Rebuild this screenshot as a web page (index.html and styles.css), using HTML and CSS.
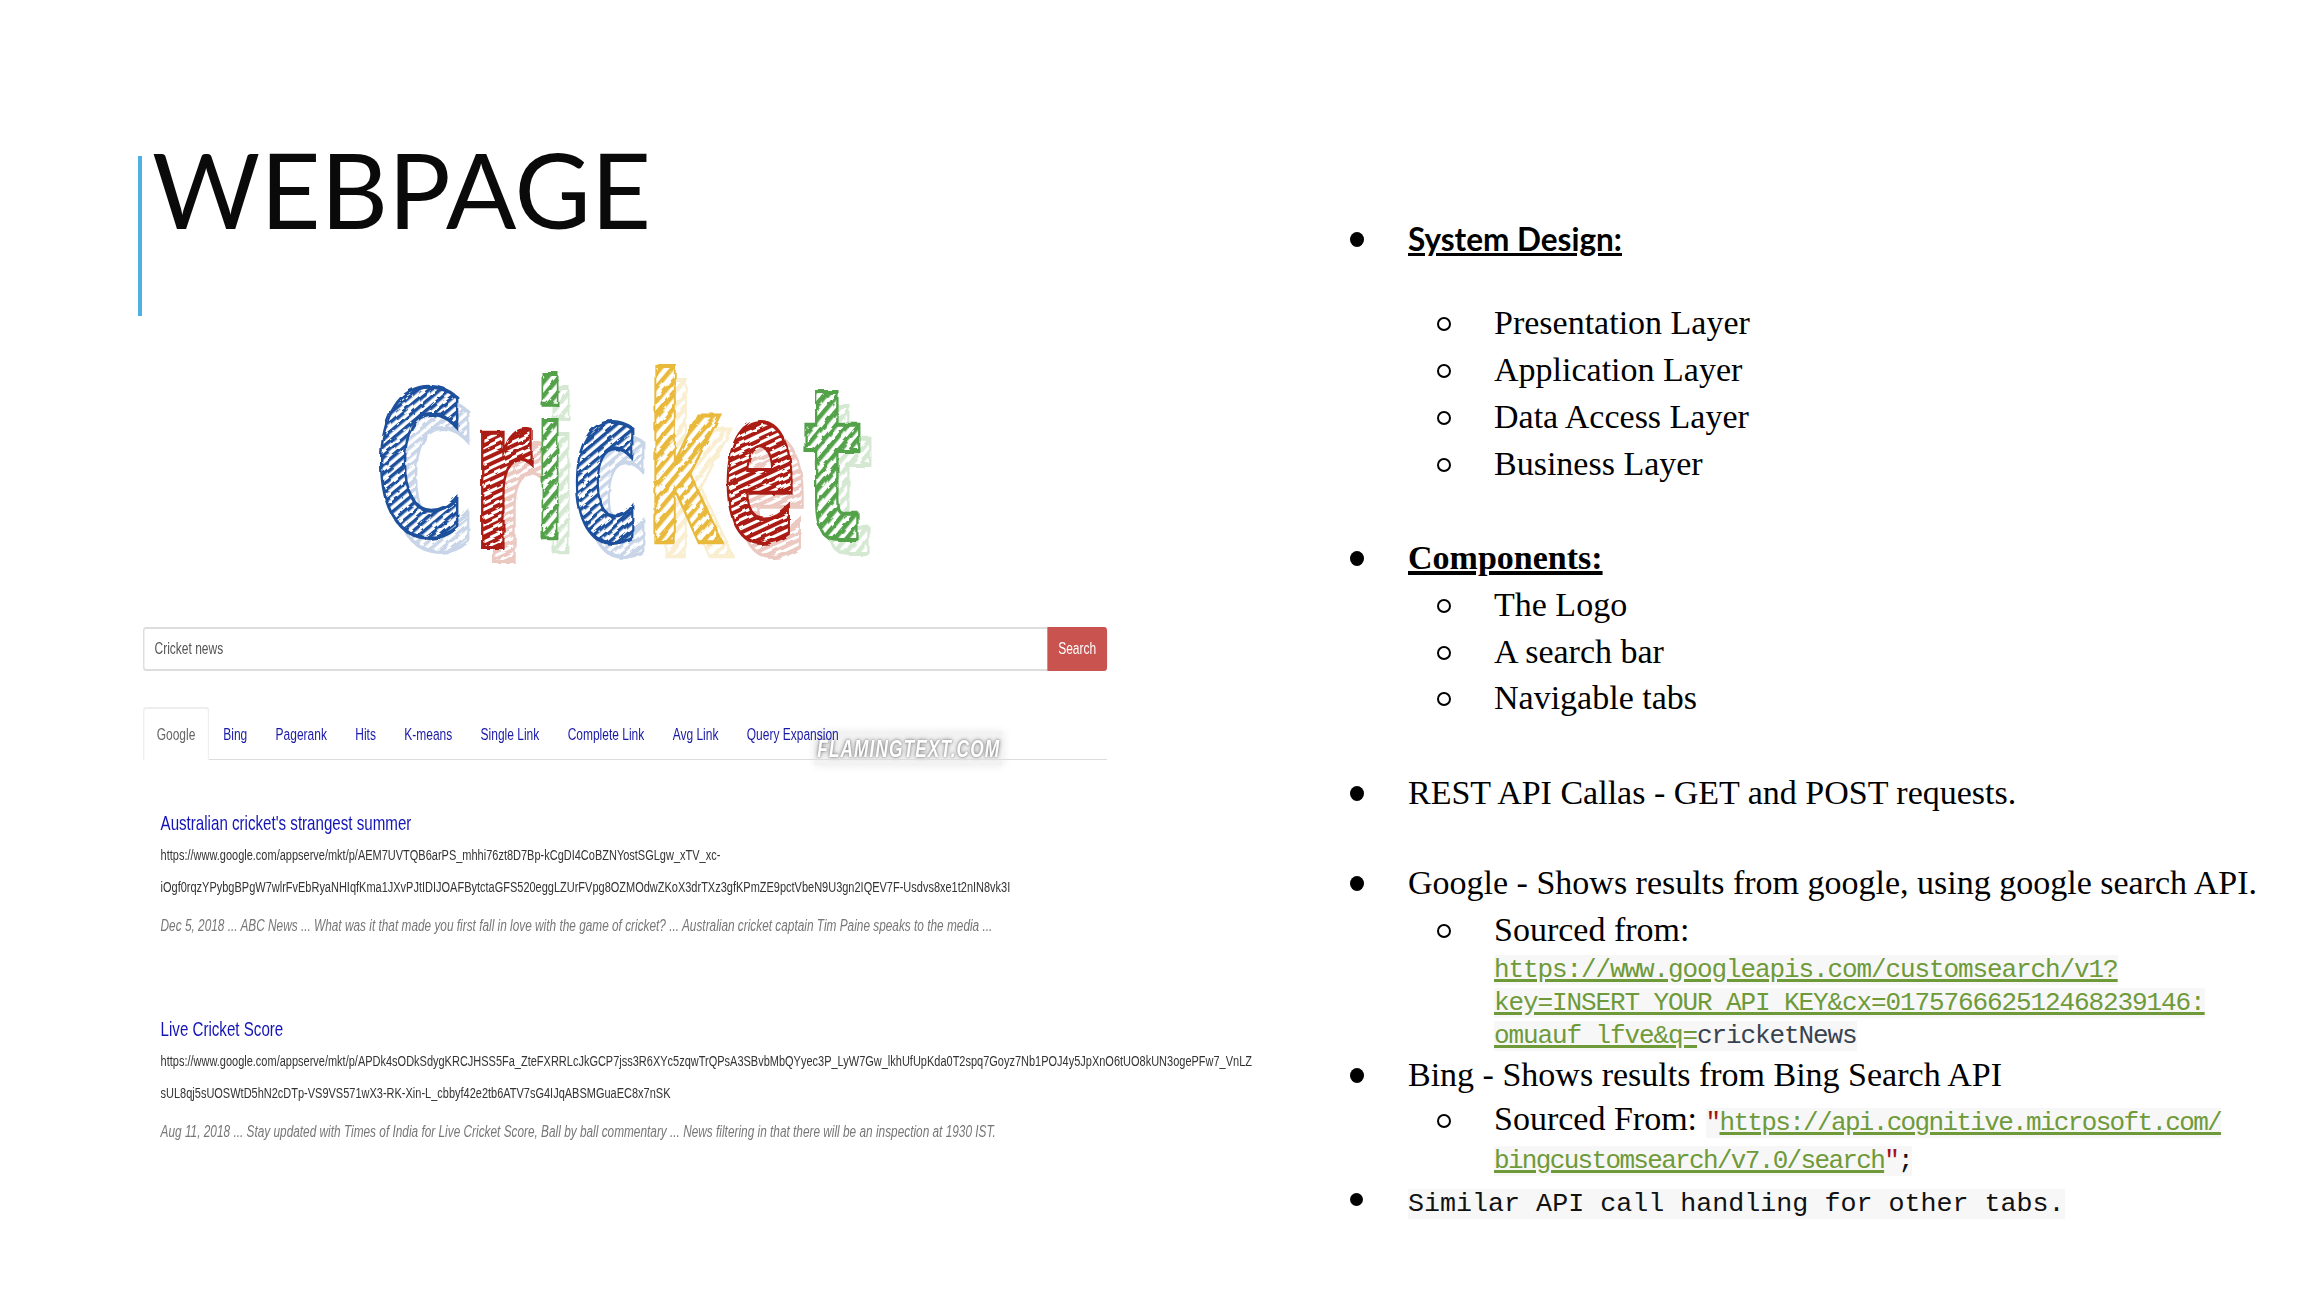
FILE: index.html
```html
<!DOCTYPE html>
<html lang="en">

<head>
    <meta charset="UTF-8">
    <title>Webpage</title>
    <link rel="stylesheet" href="styles.css">
</head>

<body>
    <div class="slide">
        <div class="left">
            <h1 class="title"><span>WEBPAGE</span></h1>

            <!-- Logo: real letters, filled with a hatch. The filter does the sketchy edge and the faded copy -->
            <svg class="logo" width="540" height="300" viewBox="0 -40 540 300" font-family="DejaVu Sans" font-weight="700" font-size="210">
                <defs>
                    <pattern id="hatch-blue" width="7" height="7" patternUnits="userSpaceOnUse" patternTransform="rotate(-40)">
                        <rect width="7" height="7" fill="#fff"/><rect width="7" height="3.5" fill="#1c4f9c"/>
                    </pattern>
                    <pattern id="hatch-red" width="7" height="7" patternUnits="userSpaceOnUse" patternTransform="rotate(-25)">
                        <rect width="7" height="7" fill="#fff"/><rect width="7" height="4" fill="#ab1f12"/>
                    </pattern>
                    <pattern id="hatch-green" width="9" height="9" patternUnits="userSpaceOnUse" patternTransform="rotate(-50)">
                        <rect width="9" height="9" fill="#fff"/><rect width="9" height="4.5" fill="#52a24a"/>
                    </pattern>
                    <pattern id="hatch-yellow" width="9" height="9" patternUnits="userSpaceOnUse" patternTransform="rotate(-50)">
                        <rect width="9" height="9" fill="#fff"/><rect width="9" height="4.5" fill="#e8b93a"/>
                    </pattern>
                    <filter id="sketch" x="-5%" y="-5%" width="115%" height="115%">
                        <feTurbulence type="fractalNoise" baseFrequency="0.09" numOctaves="2" seed="4" result="noise"/>
                        <feDisplacementMap in="SourceGraphic" in2="noise" scale="4" result="rough"/>
                        <feOffset in="rough" dx="11" dy="14" result="moved"/>
                        <feComponentTransfer in="moved" result="faded">
                            <feFuncA type="linear" slope="0.25"/>
                        </feComponentTransfer>
                        <feMerge>
                            <feMergeNode in="faded"/>
                            <feMergeNode in="rough"/>
                        </feMerge>
                    </filter>
                </defs>
                <g stroke-width="4" filter="url(#sketch)">
                    <text x="15" y="190" textLength="90" lengthAdjust="spacingAndGlyphs" font-size="200" fill="url(#hatch-blue)" stroke="#1c4f9c">C</text>
                    <text x="112" y="203" textLength="60" lengthAdjust="spacingAndGlyphs" fill="url(#hatch-red)" stroke="#ab1f12">r</text>
                    <text x="175" y="193" textLength="30" lengthAdjust="spacingAndGlyphs" font-size="216" fill="url(#hatch-green)" stroke="#52a24a">i</text>
                    <text x="212" y="195" textLength="68" lengthAdjust="spacingAndGlyphs" fill="url(#hatch-blue)" stroke="#1c4f9c">c</text>
                    <text x="286" y="197" textLength="74" lengthAdjust="spacingAndGlyphs" font-size="232" fill="url(#hatch-yellow)" stroke="#e8b93a">k</text>
                    <text x="363" y="195" textLength="74" lengthAdjust="spacingAndGlyphs" fill="url(#hatch-red)" stroke="#ab1f12">e</text>
                    <text x="444" y="195" textLength="58" lengthAdjust="spacingAndGlyphs" fill="url(#hatch-green)" stroke="#52a24a">t</text>
                </g>
            </svg>

            <!-- Squeezed screenshot of the search page -->
            <div class="shot">
                <div class="search">
                    <div class="search-input">Cricket news</div>
                    <div class="search-btn">Search</div>
                </div>
                <div class="watermark"><span>FLAMINGTEXT.COM</span></div>
                <div class="tabs">
                    <span class="tab active">Google</span>
                    <span class="tab">Bing</span>
                    <span class="tab">Pagerank</span>
                    <span class="tab">Hits</span>
                    <span class="tab">K-means</span>
                    <span class="tab">Single Link</span>
                    <span class="tab">Complete Link</span>
                    <span class="tab">Avg Link</span>
                    <span class="tab">Query Expansion</span>
                </div>
                <div class="result">
                    <div class="result-title">Australian cricket's strangest summer</div>
                    <div class="result-url">https://www.google.com/appserve/mkt/p/AEM7UVTQB6arPS_mhhi76zt8D7Bp-kCgDI4CoBZNYostSGLgw_xTV_xc-</div>
                    <div class="result-url">iOgf0rqzYPybgBPgW7wlrFvEbRyaNHIqfKma1JXvPJtIDIJOAFBytctaGFS520eggLZUrFVpg8OZMOdwZKoX3drTXz3gfKPmZE9pctVbeN9U3gn2IQEV7F-Usdvs8xe1t2nIN8vk3I</div>
                    <div class="result-text">Dec 5, 2018 ... ABC News ... What was it that made you first fall in love with the game of cricket? ... Australian cricket captain Tim Paine speaks to the media ...</div>
                </div>
                <div class="result">
                    <div class="result-title">Live Cricket Score</div>
                    <div class="result-url">https://www.google.com/appserve/mkt/p/APDk4sODkSdygKRCJHSS5Fa_ZteFXRRLcJkGCP7jss3R6XYc5zqwTrQPsA3SBvbMbQYyec3P_LyW7Gw_lkhUfUpKda0T2spq7Goyz7Nb1POJ4y5JpXnO6tUO8kUN3ogePFw7_VnLZ</div>
                    <div class="result-url">sUL8qj5sUOSWtD5hN2cDTp-VS9VS571wX3-RK-Xin-L_cbbyf42e2tb6ATV7sG4IJqABSMGuaEC8x7nSK</div>
                    <div class="result-text">Aug 11, 2018 ... Stay updated with Times of India for Live Cricket Score, Ball by ball commentary ... News filtering in that there will be an inspection at 1930 IST.</div>
                </div>
            </div>
        </div>

        <div class="right">
            <ul class="list">
                <li class="item"><div class="heading-calibri">System Design:</div></li>
            </ul>
            <ul class="sub first">
                <li class="sub-item"><div>Presentation Layer</div></li>
                <li class="sub-item"><div>Application Layer</div></li>
                <li class="sub-item"><div>Data Access Layer</div></li>
                <li class="sub-item"><div>Business Layer</div></li>
            </ul>
            <ul class="list gap">
                <li class="item"><div class="heading">Components:</div></li>
            </ul>
            <ul class="sub">
                <li class="sub-item"><div>The Logo</div></li>
                <li class="sub-item"><div>A search bar</div></li>
                <li class="sub-item"><div>Navigable tabs</div></li>
            </ul>
            <ul class="list gap">
                <li class="item"><div>REST API Callas - GET and POST requests.</div></li>
            </ul>
            <ul class="list gap-small">
                <li class="item"><div>Google - Shows results from google, using google search API.</div></li>
            </ul>
            <ul class="sub">
                <li class="sub-item">
                    <div>Sourced from:
                        <div class="code-block"><code><a>https://www.googleapis.com/customsearch/v1?</a></code><br><code><a>key=INSERT_YOUR_API_KEY&amp;cx=017576662512468239146:</a></code><br><code><a>omuauf_lfve&amp;q=</a>cricketNews</code></div>
                    </div>
                </li>
            </ul>
            <ul class="list">
                <li class="item"><div>Bing - Shows results from Bing Search API</div></li>
            </ul>
            <ul class="sub">
                <li class="sub-item tall">
                    <div>Sourced From: <code class="tight"><span class="quote">"</span><a>https://api.cognitive.microsoft.com/</a></code><br><code class="tight"><a>bingcustomsearch/v7.0/search</a><span class="quote">"</span><span class="semi">;</span></code></div>
                </li>
            </ul>
            <ul class="list">
                <li class="item last"><div><code class="plain">Similar API call handling for other tabs.</code></div></li>
            </ul>
        </div>
    </div>
</body>

</html>
```

FILE: styles.css
```css
/* Basic styling */
body {
    margin: 0;
    background-color: white;
    color: #000;
}

.slide {
    display: flex;
    width: 2306px;
    height: 1302px;
    overflow: hidden;
}

.left {
    flex: 0 0 1212px;
    min-width: 0;
    padding-left: 138px;
    padding-top: 156px;
}

.right {
    flex: 1;
    min-width: 0;
    padding-top: 216px;
    font-family: "Liberation Serif", serif;
    font-size: 34px;
    line-height: 46.8px;
}

/* Title */
.title {
    height: 160px;
    margin: 0;
    padding-left: 10px;
    border-left: 4px solid #4fb0e6;
    font-family: Lato, sans-serif;
    font-weight: 400;
    font-size: 104.5px;
    line-height: 65px;
    color: #0a0a0a;
}

/* Logo */
.logo {
    display: block;
    margin: -11px 0 0 222px;
}

/* Screenshot */
.shot {
    position: relative;
    width: 1339px;
    margin-top: 22px;
    margin-left: 5px;
    transform: scaleX(0.72);
    transform-origin: 0 0;
    font-family: "Liberation Sans", sans-serif;
    font-size: 16.67px;
    white-space: nowrap;
}

.search {
    display: flex;
    height: 44px;
}

.search-input {
    flex: 1;
    display: flex;
    align-items: center;
    padding-left: 14px;
    border: 2px solid #ddd;
    border-right: none;
    border-radius: 4px 0 0 4px;
    color: #555;
}

.search-btn {
    display: flex;
    align-items: center;
    justify-content: center;
    width: 83px;
    background-color: #c9534f;
    border-radius: 0 4px 4px 0;
    color: white;
}

.tabs {
    position: relative;
    display: flex;
    height: 52px;
    margin-top: 36px;
    border-bottom: 1px solid #ddd;
}

.tab {
    padding: 18px 19.7px 0;
    color: #1a1aa6;
}

.tab.active {
    border: 2px solid #eee;
    border-bottom: 1px solid white;
    border-radius: 4px 4px 0 0;
    margin-bottom: -1px;
    padding: 16px 17px 0;
    color: #666;
}

.watermark {
    position: absolute;
    left: 933px;
    top: 105px;
    width: 261px;
    height: 33px;
    background-color: rgba(0, 0, 0, 0.05);
    box-shadow: 0 0 10px rgba(0, 0, 0, 0.1);
    font-size: 24px;
    font-style: italic;
    font-weight: bold;
    line-height: 33px;
    letter-spacing: 1.5px;
    text-align: center;
    color: white;
    text-shadow: 0 0 3px #777, 0 0 6px #999;
}

.result {
    padding-left: 24.4px;
    margin-top: 72px;
    line-height: 32px;
}

.tabs + .result {
    margin-top: 47px;
}

.result-title {
    font-size: 21px;
    color: #1414b8;
}

.result-url {
    font-size: 15.27px;
    color: #333;
}

.result-text {
    margin-top: 6px;
    font-size: 16.45px;
    font-style: italic;
    color: #777;
}

/* Right hand list */
.list,
.sub {
    margin: 0;
    padding: 0;
    list-style: none;
}

.sub {
    padding-left: 87px;
}

.sub.first {
    margin-top: 37.5px;
}

.list.gap {
    margin-top: 47.5px;
}

.list.gap-small {
    margin-top: 44px;
}

.item,
.sub-item {
    display: flex;
}

.item::before {
    content: "";
    flex: 0 0 14px;
    height: 15px;
    margin: 16px 44px 0 0;
    border-radius: 50%;
    background-color: #000;
}

.sub-item::before {
    content: "";
    flex: 0 0 14px;
    box-sizing: border-box;
    height: 14px;
    margin: 17px 43px 0 0;
    border: 2px solid #000;
    border-radius: 50%;
}

.sub-item.tall {
    margin-top: 3.5px;
    line-height: 33px;
}

.sub-item.tall::before {
    margin-top: 12px;
}

.item.last {
    line-height: 33px;
    margin-top: 4.5px;
}

.item.last::before {
    flex-basis: 13px;
    height: 13px;
    margin: 10px 45px 0 0;
}

.heading-calibri {
    font-family: Lato, sans-serif;
    font-weight: 700;
    font-size: 31.5px;
    text-decoration: underline;
    text-decoration-thickness: 3px;
}

.heading {
    font-weight: 700;
    text-decoration: underline;
    text-decoration-thickness: 4px;
}

.code-block {
    font-size: 26px;
    line-height: 32px;
    margin-top: -1px;
}

code {
    background-color: #f7f7f7;
    font-family: "Liberation Mono", monospace;
    font-size: 26px;
    letter-spacing: -1.1px;
    color: #39434f;
}

code.tight {
    letter-spacing: -1.67px;
}

code.plain {
    letter-spacing: 0;
    font-size: 26.7px;
    color: #111;
}

code a {
    color: #6f9a3a;
    text-decoration: underline;
    text-decoration-thickness: 3px;
}

.quote {
    color: #a31515;
}

.semi {
    color: #111;
}
```
